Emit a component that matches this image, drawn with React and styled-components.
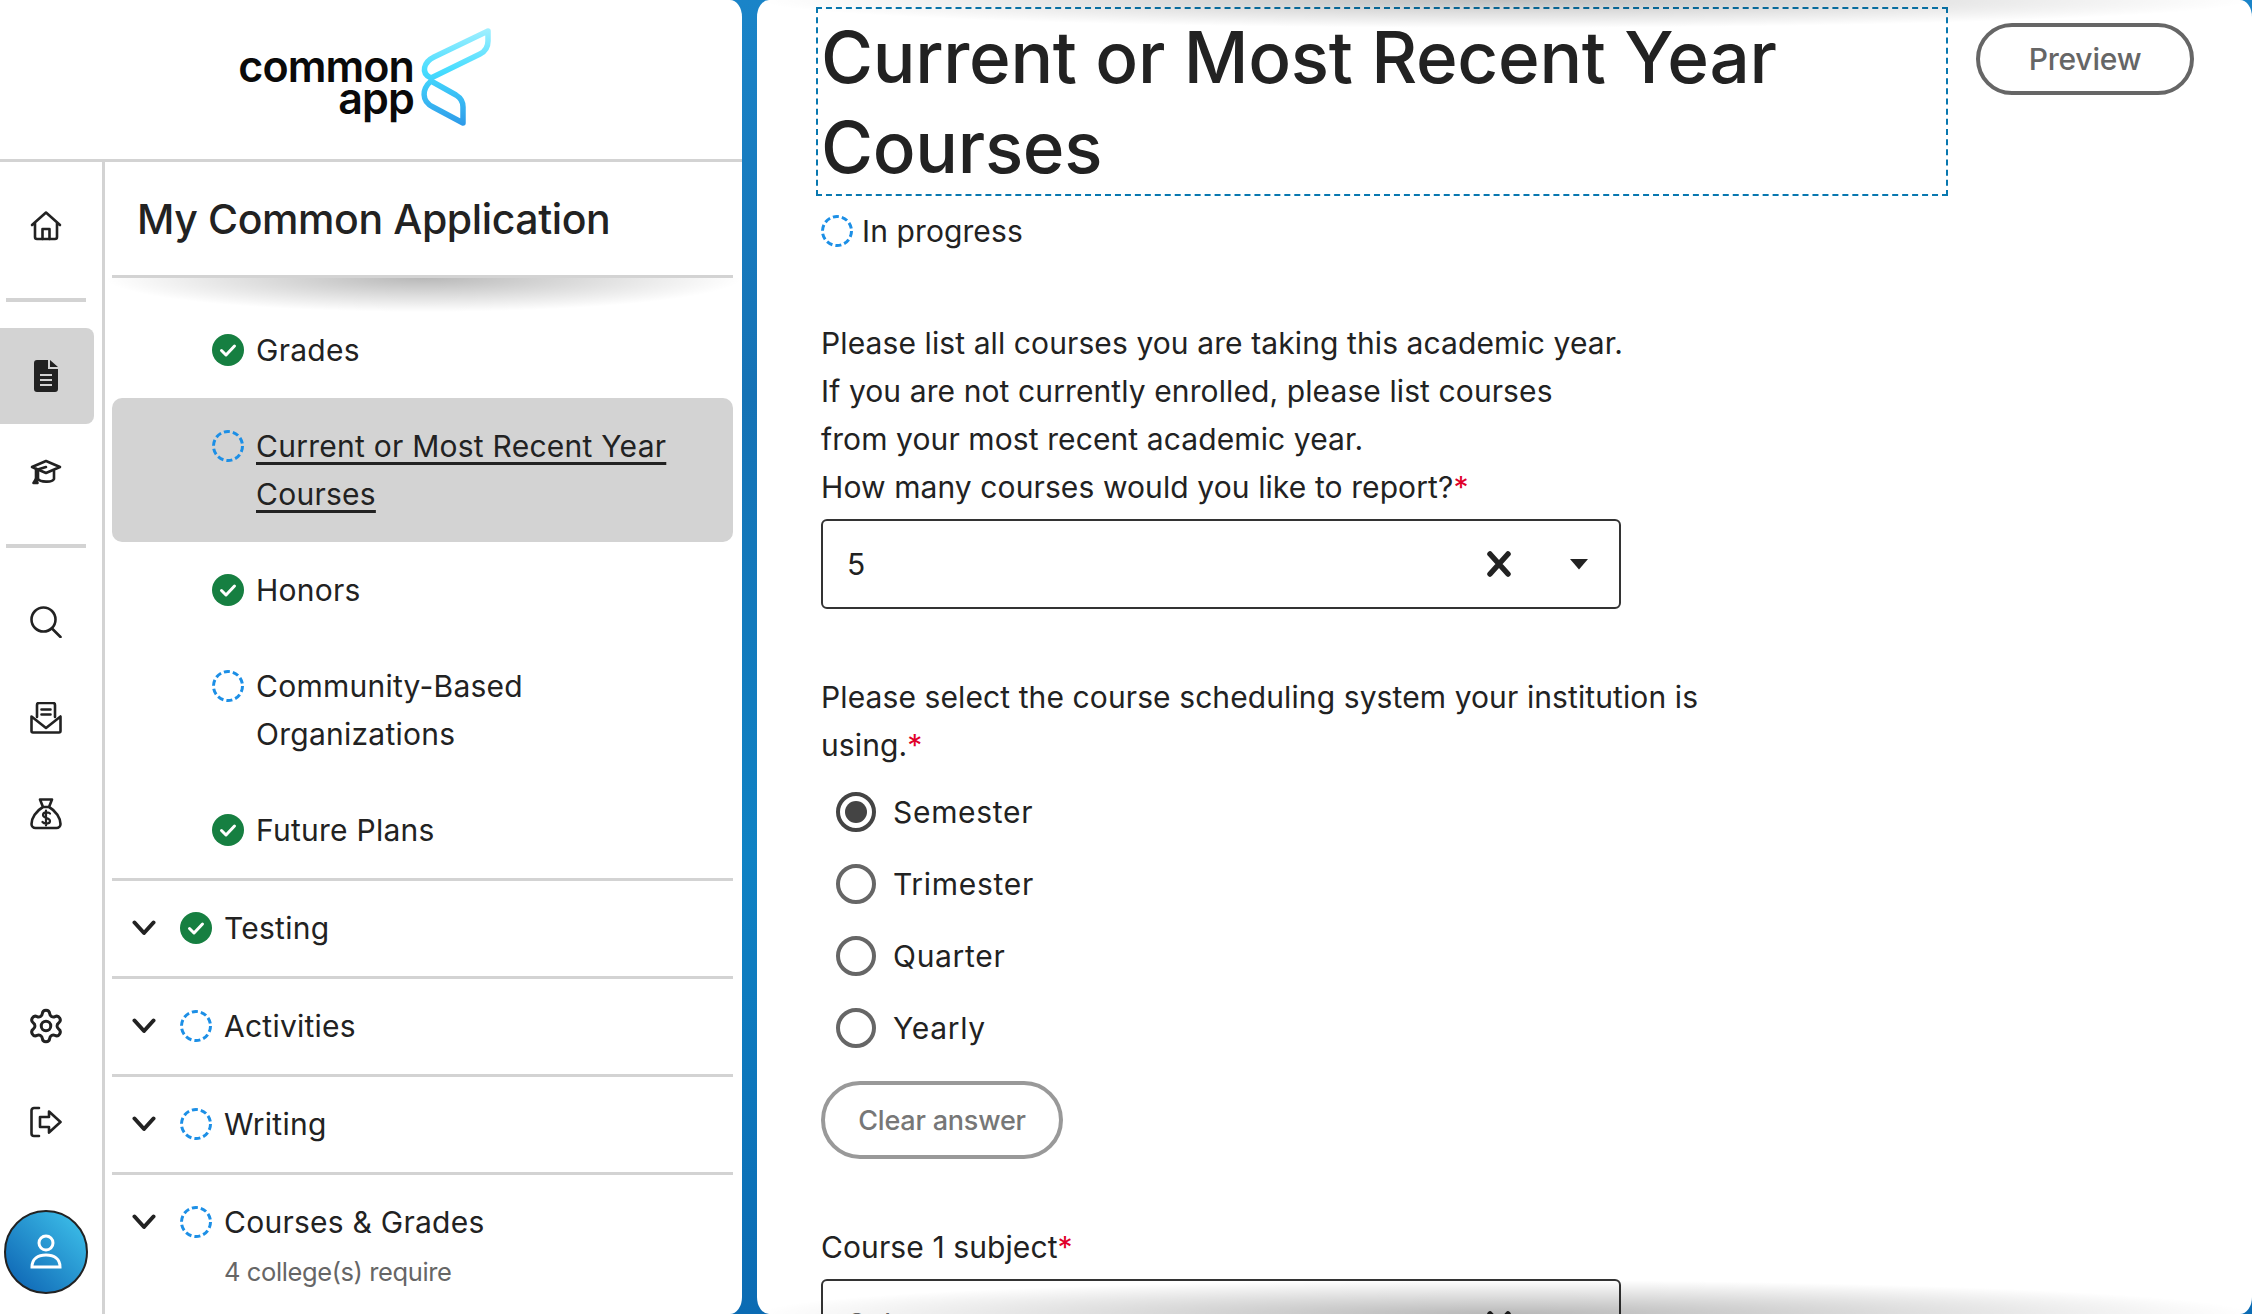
import styled, { createGlobalStyle } from "styled-components";
import { Settings } from "lucide-react";

const Global = createGlobalStyle`
  html, body { margin: 0; height: 100%; overflow: hidden; }
  body { font-family: Inter, "Liberation Sans", sans-serif; color: #222; }
  * { box-sizing: border-box; }
`;

const Page = styled.div`
  display: flex;
  width: 2252px;
  height: 1314px;
  overflow: hidden;
  background: linear-gradient(180deg, #1a84c8 0%, #1572b5 30%, #0f82c4 65%, #0b6bb3 100%);
`;

const Sidebar = styled.aside`
  display: flex;
  flex-direction: column;
  width: 742px;
  flex: none;
  background: #fff;
  border-radius: 0 12px 12px 0 / 0 17px 17px 0;
`;

const LogoBar = styled.div`
  display: flex;
  align-items: flex-start;
  gap: 4px;
  height: 162px;
  flex: none;
  padding: 26px 0 0 235px;
  border-bottom: 3px solid #d3d3d3;
`;

const LogoText = styled.div`
  width: 179px;
  margin-top: 24px;
  text-align: right;
  font-size: 43px;
  font-weight: 600;
  line-height: 32px;
  letter-spacing: -0.9px;
  color: #0a0a0a;
`;

const SideBody = styled.div`
  display: flex;
  flex: 1;
  min-height: 0;
`;

const Rail = styled.nav`
  display: flex;
  flex-direction: column;
  align-items: flex-start;
  width: 105px;
  flex: none;
  padding: 16px 0 20px;
  border-right: 3px solid #d3d3d3;
`;

const RailItem = styled.div`
  display: flex;
  align-items: center;
  justify-content: center;
  width: 94px;
  height: 96px;
  flex: none;
  padding-right: ${p => (p.$active ? "2px" : "0")};
  margin-left: ${p => (p.$active ? "0" : "-1px")};
  color: #222;
  background: ${p => (p.$active ? "#d3d3d3" : "transparent")};
  border-radius: 0 8px 8px 0;
`;

const RailRule = styled.div`
  width: 80px;
  height: 4px;
  flex: none;
  margin: 24px 0 26px 6px;
  background: #d3d3d3;
`;

const RailSpacer = styled.div`
  flex: 1;
`;

const Avatar = styled.div`
  display: flex;
  align-items: center;
  justify-content: center;
  width: 84px;
  height: 84px;
  flex: none;
  margin: 40px 0 0 4px;
  border: 2px solid #222;
  border-radius: 50%;
  color: #fff;
  background: linear-gradient(45deg, #1069b6 10%, #38b6e4 85%);
`;

const Nav = styled.div`
  flex: 1;
  min-width: 0;
  padding: 0 9px 0 7px;
`;

const NavTitle = styled.h2`
  position: relative;
  display: flex;
  align-items: center;
  height: 116px;
  margin: 0;
  padding-left: 25px;
  border-bottom: 3px solid #d3d3d3;
  font-size: 41px;
  font-weight: 500;
  letter-spacing: -0.4px;
  color: #222;

  &::after {
    content: "";
    position: absolute;
    left: -7px;
    right: -9px;
    top: 100%;
    height: 34px;
    margin-top: 3px;
    background: radial-gradient(ellipse 50% 100% at 50% 0, rgba(0, 0, 0, 0.28), rgba(0, 0, 0, 0) 100%);
  }
`;

const SubList = styled.div`
  padding-top: 24px;
  border-bottom: 3px solid #d3d3d3;
`;

const SubItem = styled.div`
  display: flex;
  gap: 12px;
  padding: 24px 0 24px 100px;
  font-size: 30px;
  line-height: 48px;
  letter-spacing: 0.25px;
  background: ${p => (p.$active ? "#d3d3d3" : "transparent")};
  border-radius: 10px;
  text-decoration: ${p => (p.$active ? "underline" : "none")};
  text-decoration-thickness: 3px;
  text-underline-offset: 5px;
`;

const SubLabel = styled.span`
  max-width: 430px;
`;

const IconSlot = styled.span`
  display: flex;
  align-items: center;
  height: 48px;
  flex: none;
`;

const SectionRow = styled.div`
  display: flex;
  align-items: flex-start;
  gap: 12px;
  padding: 23px 0 24px 20px;
  border-bottom: ${p => (p.$last ? "none" : "3px solid #d3d3d3")};
  font-size: 30px;
  line-height: 48px;
  letter-spacing: 0.25px;
`;

const Chevron = styled.span`
  display: flex;
  align-items: center;
  width: 24px;
  height: 48px;
  margin-right: 12px;
  flex: none;
`;

const RowNote = styled.div`
  margin-top: 6px;
  font-size: 25.5px;
  line-height: 40px;
  letter-spacing: -0.4px;
  color: #666;
`;

const Main = styled.main`
  position: relative;
  flex: 1;
  min-width: 0;
  margin-left: 15px;
  padding: 7px 0 0 59px;
  overflow: hidden;
  background: #fff;
  border-radius: 12px / 17px;

  &::before,
  &::after {
    content: "";
    position: absolute;
    left: 0;
    right: 0;
    height: 28px;
    pointer-events: none;
  }

  &::before {
    top: 0;
    background: radial-gradient(ellipse 50% 100% at 50% 0, rgba(0, 0, 0, 0.24), rgba(0, 0, 0, 0) 100%);
  }

  &::after {
    bottom: 0;
    height: 34px;
    background: radial-gradient(ellipse 50% 100% at 50% 100%, rgba(0, 0, 0, 0.28), rgba(0, 0, 0, 0) 100%);
  }
`;

const HeaderRow = styled.div`
  display: flex;
  align-items: flex-start;
  gap: 28px;
`;

const TitleBox = styled.div`
  width: 1132px;
  height: 189px;
  flex: none;
  padding: 3px 3px 0;
  border: 2px dashed #0878b0;
`;

const PageTitle = styled.h1`
  margin: 0;
  font-size: 71px;
  font-weight: 540;
  line-height: 90px;
  letter-spacing: -0.3px;
  color: #222;
`;

const OutlineButton = styled.button`
  height: ${p => p.$h}px;
  width: ${p => p.$w}px;
  flex: none;
  margin-top: ${p => p.$top}px;
  padding: 0;
  border: 4px solid ${p => p.$line};
  border-radius: 40px;
  background: #fff;
  font-family: inherit;
  font-size: ${p => p.$size}px;
  font-weight: 500;
  letter-spacing: -0.2px;
  color: ${p => p.$ink};
`;

const Form = styled.div`
  display: flex;
  flex-direction: column;
  align-items: flex-start;
  width: 900px;
  padding-left: 5px;
  font-size: 30px;
  line-height: 48px;
  letter-spacing: 0.1px;
`;

const Status = styled.div`
  display: flex;
  align-items: center;
  gap: 9px;
  margin-top: 11px;
`;

const Prompt = styled.p`
  width: 880px;
  margin: ${p => p.$top}px 0 0;
`;

const Required = styled.span`
  color: #e0002a;
`;

const Select = styled.div`
  display: flex;
  align-items: center;
  width: 800px;
  height: 90px;
  flex: none;
  margin-top: ${p => p.$top}px;
  padding: 0 26px 0 24px;
  border: 2.5px solid #333;
  border-radius: 6px;
  color: ${p => (p.$empty ? "#666" : "#222")};
`;

const SelectValue = styled.span`
  flex: 1;
`;

const SelectIcons = styled.span`
  display: flex;
  align-items: center;
  gap: 58px;
  margin-right: 4px;
  color: #222;
`;

const Radios = styled.div`
  display: flex;
  flex-direction: column;
  margin: 7px 0 0 15px;
`;

const RadioRow = styled.label`
  display: flex;
  align-items: center;
  gap: 17px;
  height: 72px;
  letter-spacing: 0.7px;
`;

const RadioMark = styled.span`
  display: flex;
  align-items: center;
  justify-content: center;
  width: 40px;
  height: 40px;
  border: 4px solid ${p => (p.$on ? "#444" : "#666")};
  border-radius: 50%;

  &::after {
    content: "";
    width: 22px;
    height: 22px;
    border-radius: 50%;
    background: ${p => (p.$on ? "#444" : "transparent")};
  }
`;

const Check = () => (
  <svg width="32" height="32" viewBox="0 0 32 32">
    <circle cx="16" cy="16" r="16" fill="#167f41" />
    <path d="M9.5 16.5l4.5 4.5 8.5-9" fill="none" stroke="#fff" strokeWidth="3" strokeLinecap="round" strokeLinejoin="round" />
  </svg>
);

const Pending = () => (
  <svg width="32" height="32" viewBox="0 0 32 32">
    <circle cx="16" cy="16" r="14.5" fill="none" stroke="#1c8fe6" strokeWidth="3" strokeDasharray="6.1 3" />
  </svg>
);

const Mark = ({ done }) => (done ? <Check /> : <Pending />);

const Wing = () => (
  <svg width="74" height="102" viewBox="418 27 74 102">
    <defs>
      <linearGradient id="wing" gradientUnits="userSpaceOnUse" x1="0" y1="28" x2="0" y2="128">
        <stop offset="0" stopColor="#a4f0ff" />
        <stop offset="0.45" stopColor="#45dcff" />
        <stop offset="1" stopColor="#2d98e8" />
      </linearGradient>
    </defs>
    <g fill="none" stroke="url(#wing)" strokeWidth="5.5" strokeLinejoin="round">
      <path d="M488 32L434 58C424 63 420 74 431 79L480 55C486 52 488 48 488 42Z" />
      <path d="M431 82L456 96C461 99 463 103 463 108L463 124L433 108C421 102 422 90 431 82Z" />
    </g>
  </svg>
);

const stroke = { fill: "none", stroke: "currentColor", strokeWidth: 2.6, strokeLinecap: "round", strokeLinejoin: "round" };

const HomeIcon = () => (
  <svg width="32" height="32" viewBox="0 0 32 32" {...stroke}>
    <path d="M2 15L16 2.5 30 15M5 12.5V27a2 2 0 0 0 2 2h18a2 2 0 0 0 2-2V12.5" />
    <path d="M12.5 29V19h7v10" />
  </svg>
);

const DocIcon = () => (
  <svg width="32" height="32" viewBox="0 0 32 32">
    <path fill="currentColor" d="M7 0h11v9h10v20a3 3 0 0 1-3 3H7a3 3 0 0 1-3-3V3a3 3 0 0 1 3-3zM20 0l8 7h-8z" />
    <path fill="none" stroke="#d3d3d3" strokeWidth="2.2" d="M10 15h12M10 20h12M10 25h12" />
  </svg>
);

const CapIcon = () => (
  <svg width="32" height="32" viewBox="0 0 32 32" {...stroke}>
    <path d="M2 11L16 5l14 6-14 6z" />
    <path d="M8 15v8c2 3 14 4 16 0v-8M6 13v11M16 11l-10 3" />
    <path d="M3.5 27l2.5-4 1.5 4z" fill="currentColor" />
  </svg>
);

const SearchIcon = () => (
  <svg width="32" height="32" viewBox="0 0 32 32" {...stroke}>
    <circle cx="13.5" cy="13.5" r="12" />
    <path d="M22 22.5L30.5 31" />
  </svg>
);

const MailIcon = () => (
  <svg width="32" height="32" viewBox="0 0 32 32" {...stroke}>
    <path d="M7 15V3a2 2 0 0 1 2-2h14a2 2 0 0 1 2 2v12" />
    <path d="M11.5 7.5h9M11.5 12.5h9" />
    <path d="M1.5 14.5L16 26l14.5-11.5V29a1.5 1.5 0 0 1-1.5 1.5H3A1.5 1.5 0 0 1 1.5 29z" />
  </svg>
);

const BagIcon = () => (
  <svg width="32" height="32" viewBox="0 0 32 32" {...stroke}>
    <path d="M10 1.5h12l-3 7.5h-6zM13 9C6 13 1.5 20 1.5 26a4 4 0 0 0 4 4h21a4 4 0 0 0 4-4c0-6-4.500-13-11.500-17" />
    <path strokeWidth="2.2" d="M20 15.500c-1-1.500-7-2-7 1.500s7 2.500 7 6-6 3-7.500 1M16 12.500v15" />
  </svg>
);

const ExitIcon = () => (
  <svg width="32" height="32" viewBox="0 0 32 32" {...stroke}>
    <path d="M9 2H4a2.500 2.500 0 0 0-2.500 2.500v23A2.500 2.500 0 0 0 4 30h5" />
    <path d="M19 5.500L30.500 16 19 26.500V21H10v-10h9z" />
  </svg>
);

const UserIcon = () => (
  <svg width="32" height="36" viewBox="0 0 32 36" fill="none" stroke="currentColor" strokeWidth="3">
    <circle cx="16" cy="9" r="7" />
    <path d="M2 33c0-8 6-12 14-12s14 4 14 12z" />
  </svg>
);

const ChevronIcon = () => (
  <svg width="24" height="16" viewBox="0 0 24 16" fill="none" stroke="#222" strokeWidth="4" strokeLinecap="round" strokeLinejoin="round">
    <path d="M2.500 2.500L12 13l9.500-10.500" />
  </svg>
);

const ClearIcon = () => (
  <svg width="24" height="26" viewBox="0 0 24 26" fill="none" stroke="#222" strokeWidth="5.500" strokeLinecap="round">
    <path d="M3 3l18 20M21 3L3 23" />
  </svg>
);

const CaretIcon = () => (
  <svg width="20" height="12" viewBox="0 0 20 12">
    <path d="M1 1h18l-9 10.500z" fill="#222" />
  </svg>
);

const subItems = [
  { label: "Grades", done: true },
  { label: "Current or Most Recent Year Courses", active: true },
  { label: "Honors", done: true },
  { label: "Community-Based Organizations" },
  { label: "Future Plans", done: true },
];

const sections = [
  { label: "Testing", done: true },
  { label: "Activities" },
  { label: "Writing" },
  { label: "Courses & Grades", note: "4 college(s) require" },
];

const schedules = ["Semester", "Trimester", "Quarter", "Yearly"];

export default function App() {
  return (
    <Page>
      <Global />
      <Sidebar>
        <LogoBar>
          <LogoText>common app</LogoText>
          <Wing />
        </LogoBar>
        <SideBody>
          <Rail>
            <RailItem><HomeIcon /></RailItem>
            <RailRule />
            <RailItem $active><DocIcon /></RailItem>
            <RailItem><CapIcon /></RailItem>
            <RailRule />
            <RailItem><SearchIcon /></RailItem>
            <RailItem><MailIcon /></RailItem>
            <RailItem><BagIcon /></RailItem>
            <RailSpacer />
            <RailItem><Settings size={38} strokeWidth={1.9} /></RailItem>
            <RailItem><ExitIcon /></RailItem>
            <Avatar><UserIcon /></Avatar>
          </Rail>
          <Nav>
            <NavTitle>My Common Application</NavTitle>
            <SubList>
              {subItems.map(item => (
                <SubItem key={item.label} $active={item.active}>
                  <IconSlot><Mark done={item.done} /></IconSlot>
                  <SubLabel>{item.label}</SubLabel>
                </SubItem>
              ))}
            </SubList>
            {sections.map((row, i) => (
              <SectionRow key={row.label} $last={i === sections.length - 1}>
                <Chevron><ChevronIcon /></Chevron>
                <IconSlot><Mark done={row.done} /></IconSlot>
                <div>
                  {row.label}
                  {row.note && <RowNote>{row.note}</RowNote>}
                </div>
              </SectionRow>
            ))}
          </Nav>
        </SideBody>
      </Sidebar>
      <Main>
        <HeaderRow>
          <TitleBox>
            <PageTitle>Current or Most Recent Year Courses</PageTitle>
          </TitleBox>
          <OutlineButton $top={16} $w={218} $h={72} $size={30} $line="#666" $ink="#666">Preview</OutlineButton>
        </HeaderRow>
        <Form>
          <Status><Pending /> In progress</Status>
          <Prompt $top={64}>
            Please list all courses you are taking this academic year.<br />
            If you are not currently enrolled, please list courses<br />
            from your most recent academic year.<br />
            How many courses would you like to report?<Required>*</Required>
          </Prompt>
          <Select $top={8}>
            <SelectValue>5</SelectValue>
            <SelectIcons><ClearIcon /><CaretIcon /></SelectIcons>
          </Select>
          <Prompt $top={64}>
            Please select the course scheduling system your institution is using.<Required>*</Required>
          </Prompt>
          <Radios>
            {schedules.map((name, i) => (
              <RadioRow key={name}>
                <RadioMark $on={i === 0} />
                {name}
              </RadioRow>
            ))}
          </Radios>
          <OutlineButton $top={17} $w={242} $h={78} $size={27} $line="#999" $ink="#777">Clear answer</OutlineButton>
          <Prompt $top={64}>Course 1 subject<Required>*</Required></Prompt>
          <Select $top={8} $empty>
            <SelectValue>Select...</SelectValue>
            <SelectIcons><ClearIcon /><CaretIcon /></SelectIcons>
          </Select>
        </Form>
      </Main>
    </Page>
  );
}
